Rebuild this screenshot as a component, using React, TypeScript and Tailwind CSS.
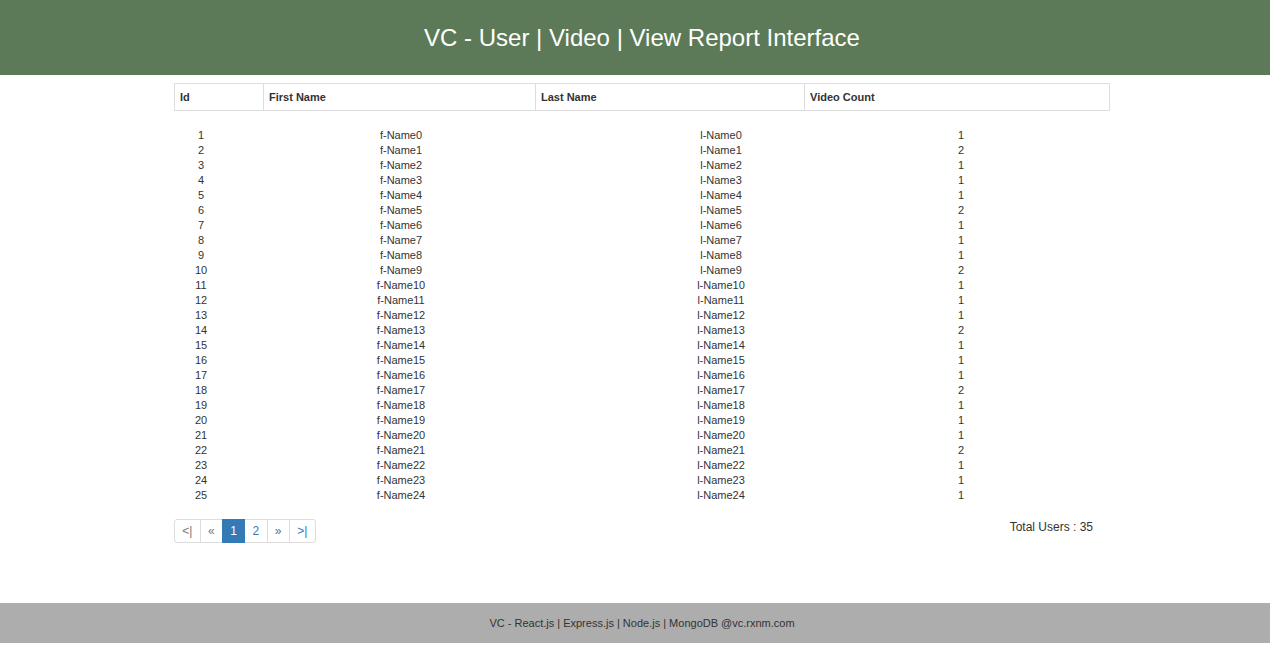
const users = Array.from({ length: 25 }, (_, i) => ({
  id: i + 1,
  firstName: `f-Name${i}`,
  lastName: `l-Name${i}`,
  videoCount: [1, 2, 1, 1, 1, 2, 1, 1, 1, 2, 1, 1, 1, 2, 1, 1, 1, 2, 1, 1, 1, 2, 1, 1, 1][i],
}))

const pages = [
  { label: '<|', disabled: true },
  { label: '«', disabled: true },
  { label: '1', active: true },
  { label: '2' },
  { label: '»' },
  { label: '>|' },
]

export default function App() {
  return (
    <div className="min-h-[648px] bg-white font-['Liberation_Sans',Arial,sans-serif] text-[#333]">
      <header className="h-[75px] bg-[#5c7a58]">
        <div className="ml-[174px] flex h-full w-[936px] items-center justify-center text-[24px] text-white">
          VC - User | Video | View Report Interface
        </div>
      </header>

      <main className="ml-[174px] w-[936px] pt-2">
        <div className="grid grid-cols-[88px_272px_269px_1fr] border border-[#ddd] text-[11px] font-bold">
          <div className="px-[5px] py-[5px] leading-[16px]">Id</div>
          <div className="border-l border-[#ddd] px-[5px] py-[5px] leading-[16px]">First Name</div>
          <div className="border-l border-[#ddd] px-[5px] py-[5px] leading-[16px]">Last Name</div>
          <div className="border-l border-[#ddd] px-[5px] py-[5px] leading-[16px]">Video Count</div>
        </div>

        <div className="mt-[17px] grid grid-cols-[54px_346px_294px_186px] text-center text-[11px] leading-[15px]">
          {users.map((u) => (
            <div key={u.id} className="contents">
              <div>{u.id}</div>
              <div>{u.firstName}</div>
              <div>{u.lastName}</div>
              <div>{u.videoCount}</div>
            </div>
          ))}
        </div>

        <div className="mt-[16px] flex items-start justify-between">
          <ul className="flex text-[12px]">
            {pages.map((p, i) => (
              <li
                key={p.label}
                className={[
                  'border px-[7.3px] leading-[22px]',
                  i > 0 ? '-ml-px' : '',
                  i === 0 ? 'rounded-l-[3px]' : '',
                  i === pages.length - 1 ? 'rounded-r-[3px]' : '',
                  p.active
                    ? 'relative z-10 border-[#337ab7] bg-[#337ab7] text-white'
                    : p.disabled
                      ? 'border-[#ddd] bg-white text-[#777]'
                      : 'border-[#ddd] bg-white text-[#337ab7]',
                ].join(' ')}
              >
                {p.label}
              </li>
            ))}
          </ul>
          <p className="pr-[17px] pt-[1px] text-[12px] leading-[14px]">Total Users : 35</p>
        </div>
      </main>

      <footer className="mt-[60px] h-10 bg-[#adadad]">
        <div className="ml-[174px] flex h-full w-[936px] items-center justify-center text-[11px]">
          VC - React.js | Express.js | Node.js | MongoDB @vc.rxnm.com
        </div>
      </footer>
    </div>
  )
}
